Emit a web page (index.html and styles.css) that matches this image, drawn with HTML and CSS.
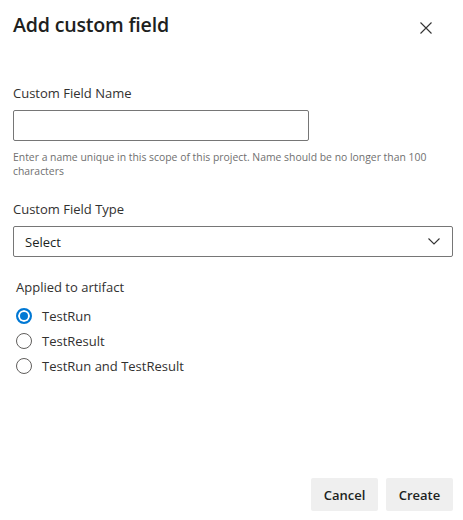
FILE: index.html
```html
<!DOCTYPE html>
<html>
<head>
<meta charset="utf-8">
<link rel="stylesheet" href="styles.css">
</head>
<body>
<div class="dialog">
  <div class="header">
    <h1 class="title">Add custom field</h1>
    <button class="close" aria-label="Close">
      <svg width="12" height="12" viewBox="0 0 12 12"><path d="M0.5 0.5 L11.5 11.5 M11.5 0.5 L0.5 11.5" stroke="#333" stroke-width="1.1" fill="none"/></svg>
    </button>
  </div>
  <div class="content">
    <div class="field">
      <label class="label">Custom Field Name</label>
      <input class="text-input" type="text">
      <div class="help">Enter a name unique in this scope of this project. Name should be no longer than 100 characters</div>
    </div>
    <div class="field field-type">
      <label class="label">Custom Field Type</label>
      <div class="select">
        <span>Select</span>
        <svg width="12" height="7" viewBox="0 0 12 7"><path d="M0.5 0.5 L6 6 L11.5 0.5" stroke="#333" stroke-width="1.1" fill="none"/></svg>
      </div>
    </div>
    <div class="group">
      <div class="group-label">Applied to artifact</div>
      <div class="radios">
        <div class="radio checked"><span class="circle"></span><span>TestRun</span></div>
        <div class="radio"><span class="circle"></span><span>TestResult</span></div>
        <div class="radio"><span class="circle"></span><span>TestRun and TestResult</span></div>
      </div>
    </div>
  </div>
  <div class="footer">
    <button class="btn">Cancel</button>
    <button class="btn">Create</button>
  </div>
</div>
</body>
</html>
```
FILE: styles.css
```css
html, body {
  margin: 0;
  padding: 0;
  background: #fff;
}
body {
  font-family: "Open Sans", "Noto Sans", sans-serif;
  color: #323130;
  width: 463px;
  height: 520px;
}
.dialog {
  box-sizing: border-box;
  height: 520px;
  padding: 0 10px 9px 13px;
  display: flex;
  flex-direction: column;
}
.header {
  display: flex;
  justify-content: space-between;
  align-items: flex-start;
  padding-top: 11px;
}
.title {
  margin: 0;
  font-size: 19.6px;
  font-weight: 600;
  line-height: 28px;
  color: #201f1e;
  letter-spacing: -0.2px;
}
.close {
  border: 0;
  background: none;
  padding: 0;
  margin: 11px 21px 0 0;
  width: 12px;
  height: 12px;
  display: flex;
}
.content {
  flex: 1;
  padding-top: 45px;
}
.field {
  display: flex;
  flex-direction: column;
}
.label {
  font-size: 13px;
  line-height: 18px;
  color: #323130;
  margin-bottom: 8px;
}
.text-input {
  box-sizing: border-box;
  width: 296px;
  height: 31px;
  border: 1px solid #767676;
  border-radius: 2px;
  margin: 0;
  padding: 0 8px;
}
.help {
  font-size: 10.4px;
  line-height: 14px;
  color: #707070;
  margin-top: 9px;
  padding-right: 10px;
}
.field-type {
  margin-top: 22px;
}
.select {
  box-sizing: border-box;
  height: 31px;
  border: 1px solid #767676;
  border-radius: 2px;
  display: flex;
  align-items: center;
  justify-content: space-between;
  padding: 0 12px 0 11px;
  font-size: 13px;
  color: #201f1e;
}
.group {
  margin-top: 21px;
  padding-left: 3px;
}
.group-label {
  font-size: 13px;
  line-height: 18px;
  color: #323130;
  margin-bottom: 11px;
}
.radios {
  display: flex;
  flex-direction: column;
  gap: 7px;
}
.radio {
  display: flex;
  align-items: center;
  gap: 10px;
  font-size: 13px;
  line-height: 18px;
  color: #323130;
}
.circle {
  box-sizing: border-box;
  width: 16px;
  height: 16px;
  border-radius: 50%;
  border: 1px solid #605e5c;
  flex: none;
}
.radio.checked .circle {
  border: 2px solid #0078d4;
  background: #0078d4;
  box-shadow: inset 0 0 0 2px #fff;
}
.footer {
  display: flex;
  justify-content: flex-end;
  gap: 8px;
}
.btn {
  font-family: inherit;
  font-size: 13px;
  font-weight: 600;
  color: #201f1e;
  background: #efefef;
  border: 0;
  border-radius: 2px;
  height: 33px;
  padding: 0 12px;
  min-width: 67px;
}
```
